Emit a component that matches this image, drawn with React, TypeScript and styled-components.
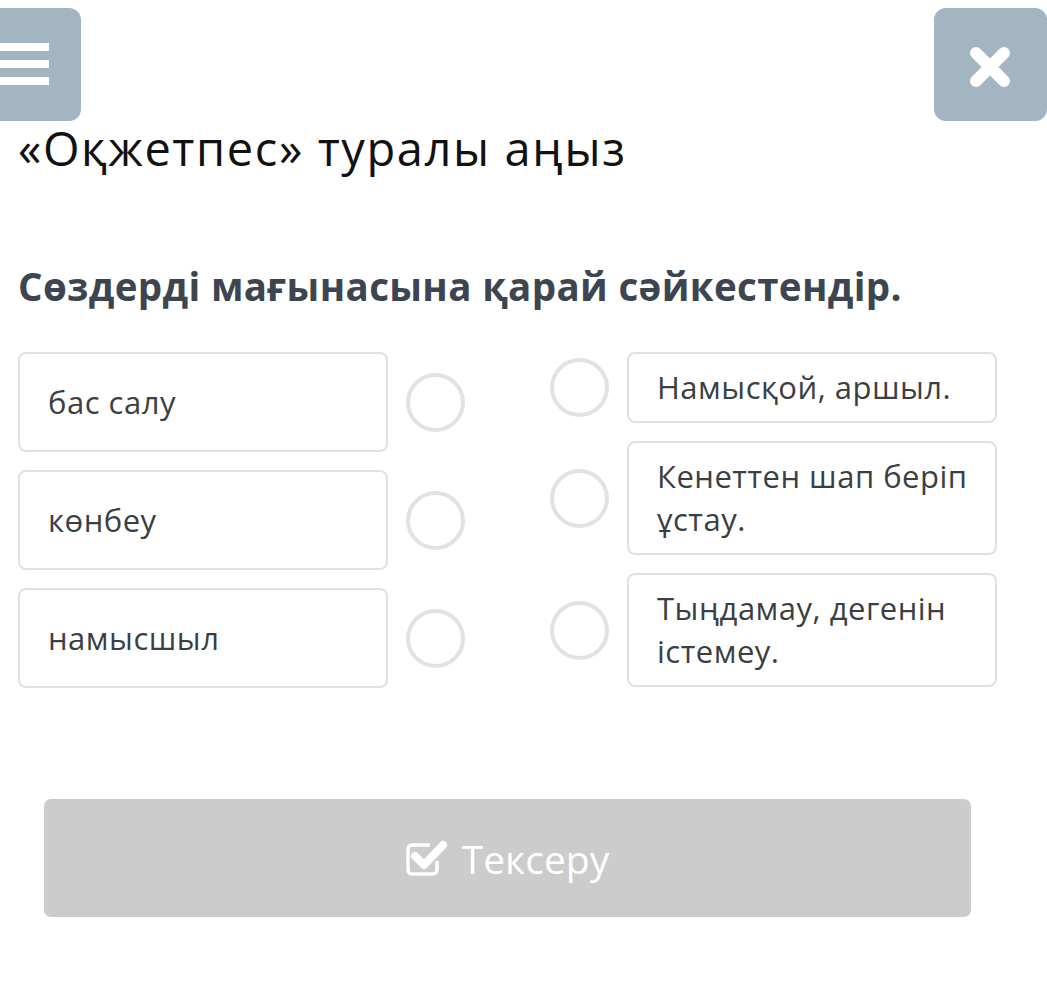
import React from "react";
import styled, { createGlobalStyle } from "styled-components";

const Global = createGlobalStyle`
  html, body { margin: 0; padding: 0; background: #ffffff; }
  body { font-family: "Open Sans", "Noto Sans", sans-serif; }
  * { box-sizing: border-box; }
`;

const Page = styled.div`
  width: 1047px;
  height: 985px;
  overflow: hidden;
  padding-top: 8px;
`;

const TopBar = styled.div`
  display: flex;
  justify-content: space-between;
  height: 113px;
`;

const IconButton = styled.button<{ $side: "left" | "right" }>`
  width: 113px;
  height: 113px;
  flex: none;
  border: none;
  border-radius: 12px;
  background: #a2b5c1;
  display: flex;
  align-items: center;
  justify-content: center;
  padding: 0;
  margin: 0;
  ${(p) => (p.$side === "left" ? "margin-left: -32px;" : "margin-right: 0;")}
`;

const Title = styled.h1`
  margin: 0;
  padding: 0 18px;
  font-size: 47px;
  font-weight: 400;
  letter-spacing: 1.6px;
  line-height: 56px;
  color: #111111;
  margin-top: -1px;
`;

const Heading = styled.h2`
  margin: 0;
  padding: 0 18px;
  margin-top: 85px;
  font-size: 38.5px;
  font-weight: 700;
  letter-spacing: 0.35px;
  line-height: 50px;
  color: #3c4550;
`;

const Board = styled.div`
  display: flex;
  justify-content: space-between;
  padding: 0 50px 0 18px;
  margin-top: 41px;
`;

const Column = styled.div`
  display: flex;
  flex-direction: column;
  gap: 18px;
`;

const Row = styled.div`
  display: flex;
  align-items: center;
  gap: 18px;
`;

const Card = styled.div<{ $tall?: boolean }>`
  width: 370px;
  min-height: ${(p) => (p.$tall ? "100px" : "71px")};
  border: 2px solid #e1e1e1;
  border-radius: 8px;
  background: #ffffff;
  padding: 12px 10px 12px 28px;
  display: flex;
  align-items: center;
  font-size: 31px;
  letter-spacing: 0.5px;
  line-height: 43px;
  color: #3b3f43;
`;

const Dot = styled.div`
  width: 59px;
  height: 59px;
  flex: none;
  border-radius: 50%;
  border: 4px solid #dfe3e6;
  background: #ffffff;
`;

const CheckButton = styled.button`
  display: flex;
  align-items: center;
  justify-content: center;
  gap: 14px;
  margin: 111px 0 0 44px;
  width: 927px;
  height: 118px;
  border: none;
  border-radius: 7px;
  background: #cccccc;
  color: #ffffff;
  font-family: "Open Sans", sans-serif;
  font-size: 39px;
  padding: 0 0 0 0;
`;

const Cross = () => (
  <svg width="113" height="113" viewBox="0 0 113 113">
    <path d="M42 45 L70 73 M70 45 L42 73" stroke="#fff" strokeWidth="12" strokeLinecap="round" />
  </svg>
);

const Hamburger = () => (
  <svg width="113" height="113" viewBox="0 0 113 113">
    <rect x="0" y="35" width="81" height="8" fill="#fff" />
    <rect x="0" y="52" width="81" height="8" fill="#fff" />
    <rect x="0" y="69" width="81" height="8" fill="#fff" />
  </svg>
);

const CheckIcon = () => (
  <svg width="42" height="38" viewBox="0 0 42 38">
    <path
      d="M31 22 V31 a4 4 0 0 1 -4 4 H6 a4 4 0 0 1 -4 -4 V10 a4 4 0 0 1 4 -4 H24"
      fill="none"
      stroke="#fff"
      strokeWidth="3.5"
    />
    <path d="M9 17 L18 26 L37 6" fill="none" stroke="#fff" strokeWidth="8" strokeLinejoin="round" strokeLinecap="round" />
  </svg>
);

const left = ["бас салу", "көнбеу", "намысшыл"];
const right = ["Намысқой, аршыл.", "Кенеттен шап беріп ұстау.", "Тыңдамау, дегенін істемеу."];

export default function App() {
  return (
    <Page>
      <Global />
      <TopBar>
        <IconButton $side="left" aria-label="menu">
          <Hamburger />
        </IconButton>
        <IconButton $side="right" aria-label="close">
          <Cross />
        </IconButton>
      </TopBar>
      <Title>«Оқжетпес» туралы аңыз</Title>
      <Heading>Сөздерді мағынасына қарай сәйкестендір.</Heading>
      <Board>
        <Column>
          {left.map((t) => (
            <Row key={t}>
              <Card $tall>{t}</Card>
              <Dot />
            </Row>
          ))}
        </Column>
        <Column>
          {right.map((t) => (
            <Row key={t}>
              <Dot />
              <Card>{t}</Card>
            </Row>
          ))}
        </Column>
      </Board>
      <CheckButton>
        <CheckIcon />
        Тексеру
      </CheckButton>
    </Page>
  );
}
